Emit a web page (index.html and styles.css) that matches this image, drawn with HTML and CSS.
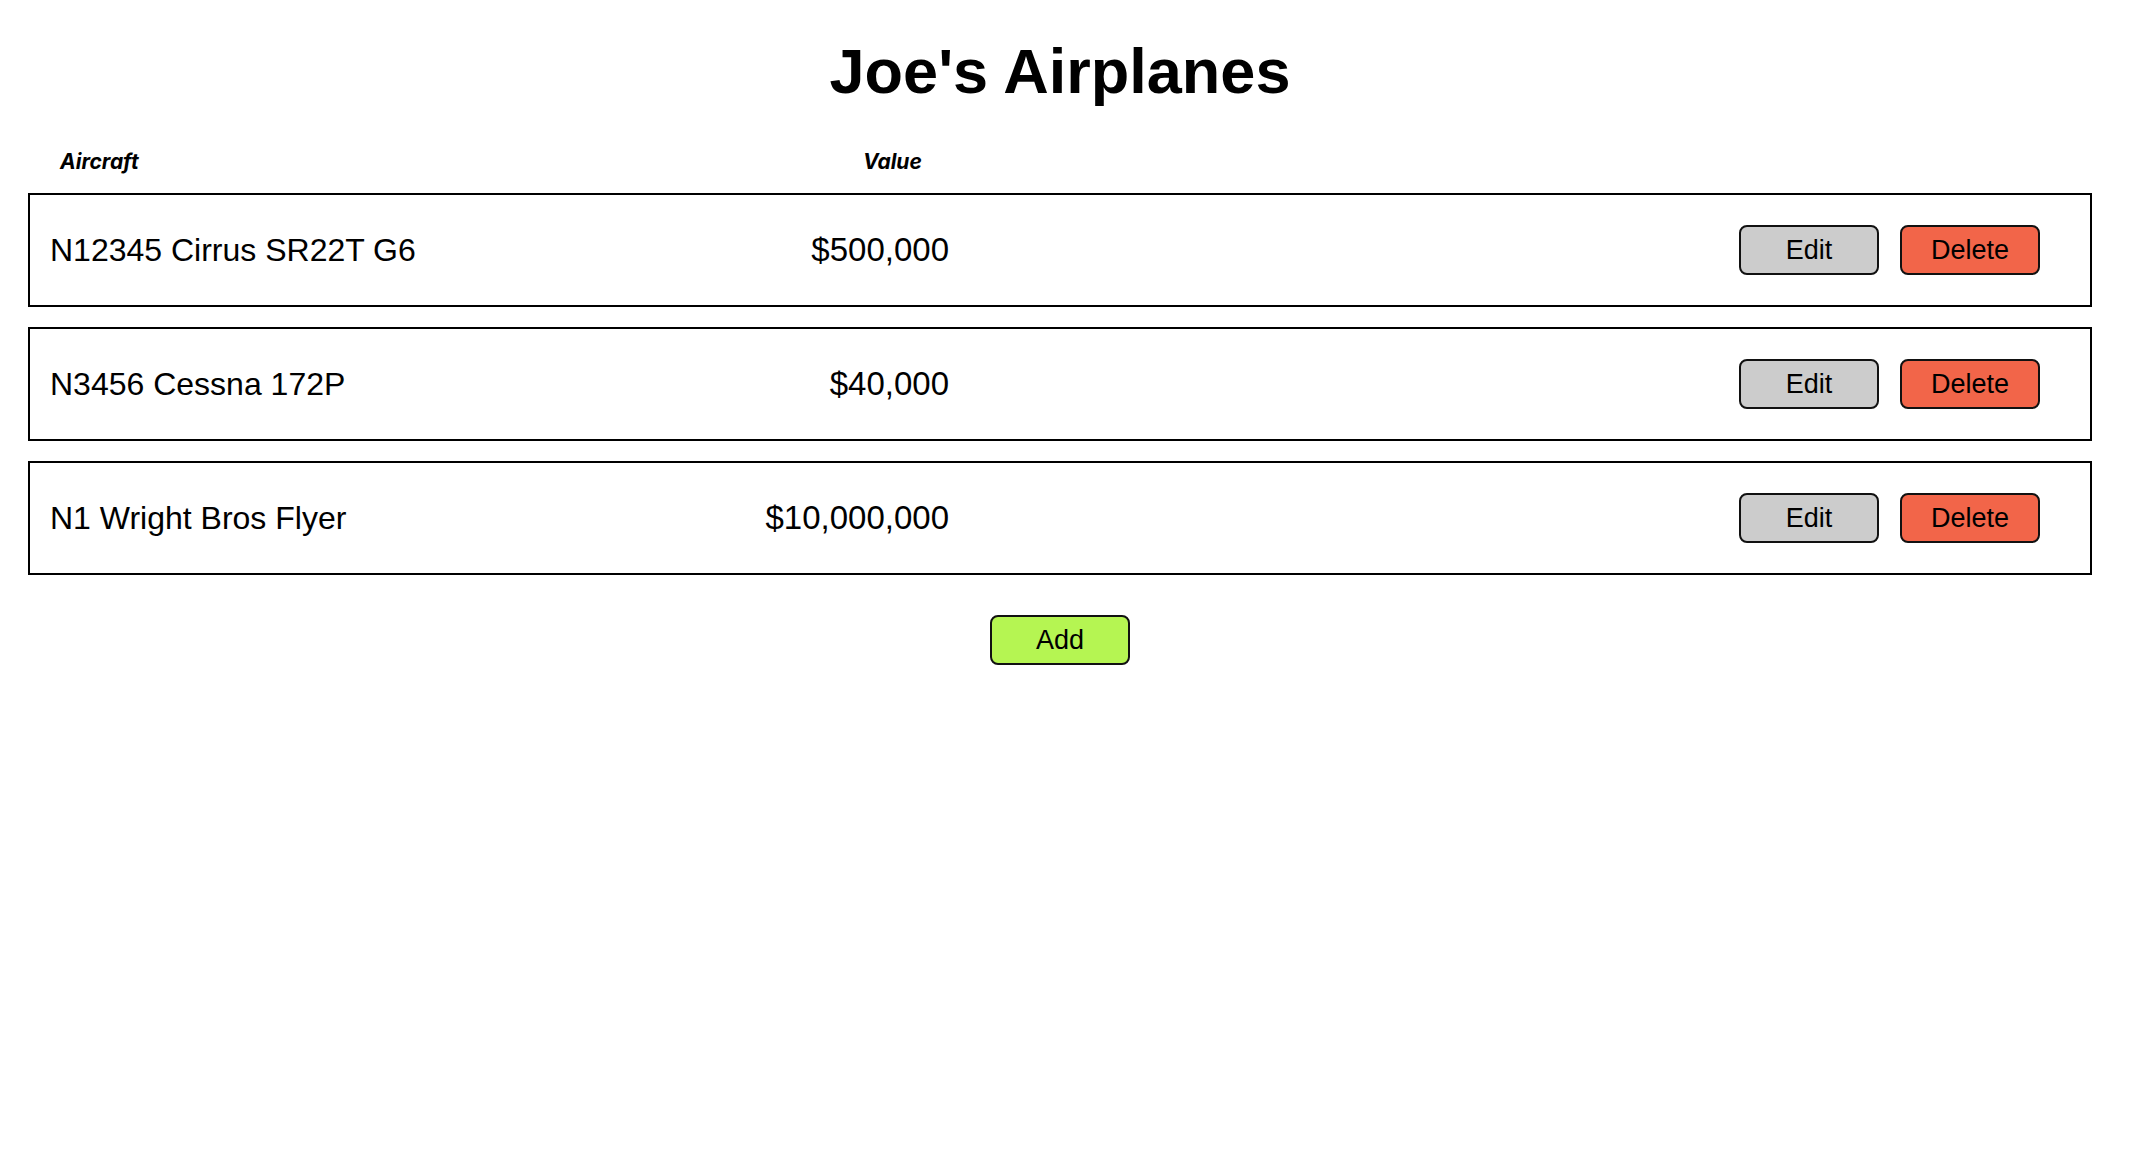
FILE: index.html
```html
<!DOCTYPE html>
<html>
<head>
<meta charset="utf-8">
<title>Joe's Airplanes</title>
<link rel="stylesheet" href="styles.css">
</head>
<body>
<main class="page">
  <h1 class="title">Joe's Airplanes</h1>
  <div class="list-head">
    <span class="head-name">Aircraft</span>
    <span class="head-value">Value</span>
  </div>
  <div class="rows">
    <div class="row">
      <span class="name">N12345 Cirrus SR22T G6</span>
      <span class="value">$500,000</span>
      <div class="actions">
        <button class="btn btn-edit">Edit</button>
        <button class="btn btn-delete">Delete</button>
      </div>
    </div>
    <div class="row">
      <span class="name">N3456 Cessna 172P</span>
      <span class="value">$40,000</span>
      <div class="actions">
        <button class="btn btn-edit">Edit</button>
        <button class="btn btn-delete">Delete</button>
      </div>
    </div>
    <div class="row">
      <span class="name">N1 Wright Bros Flyer</span>
      <span class="value">$10,000,000</span>
      <div class="actions">
        <button class="btn btn-edit">Edit</button>
        <button class="btn btn-delete">Delete</button>
      </div>
    </div>
  </div>
  <div class="add-wrap">
    <button class="btn btn-add">Add</button>
  </div>
</main>
</body>
</html>
```

FILE: styles.css
```css
html, body {
  margin: 0;
  padding: 0;
  background: #ffffff;
  color: #000000;
  font-family: "Liberation Sans", Arial, sans-serif;
}

.page {
  padding: 35px 38px 0 28px;
}

.title {
  margin: 0;
  font-size: 63px;
  line-height: 72px;
  font-weight: bold;
  text-align: center;
}

.list-head {
  display: flex;
  margin-top: 43px;
  padding-left: 32px;
  font-family: Inter, "Liberation Sans", sans-serif;
  font-weight: bold;
  font-style: italic;
  font-size: 21px;
  line-height: 24px;
}

.head-name {
  width: 803px;
}

.rows {
  display: flex;
  flex-direction: column;
  gap: 20px;
  margin-top: 19px;
}

.row {
  display: flex;
  align-items: center;
  height: 110px;
  border: 2px solid #000;
  padding: 0 50px 0 20px;
  font-size: 32px;
}

.name {
  width: 540px;
  white-space: nowrap;
}

.value {
  width: 359px;
  text-align: right;
  white-space: nowrap;
  font-size: 33px;
}

.actions {
  margin-left: auto;
  display: flex;
  gap: 21px;
}

.btn {
  box-sizing: border-box;
  width: 140px;
  height: 50px;
  border: 2px solid #111;
  border-radius: 8px;
  font-family: "Liberation Sans", Arial, sans-serif;
  font-size: 27px;
  color: #000;
  padding: 0;
  cursor: pointer;
}

.btn-edit {
  background: #cccccc;
}

.btn-delete {
  background: #f26549;
}

.btn-add {
  background: #b5f552;
}

.add-wrap {
  display: flex;
  justify-content: center;
  margin-top: 40px;
}
```
